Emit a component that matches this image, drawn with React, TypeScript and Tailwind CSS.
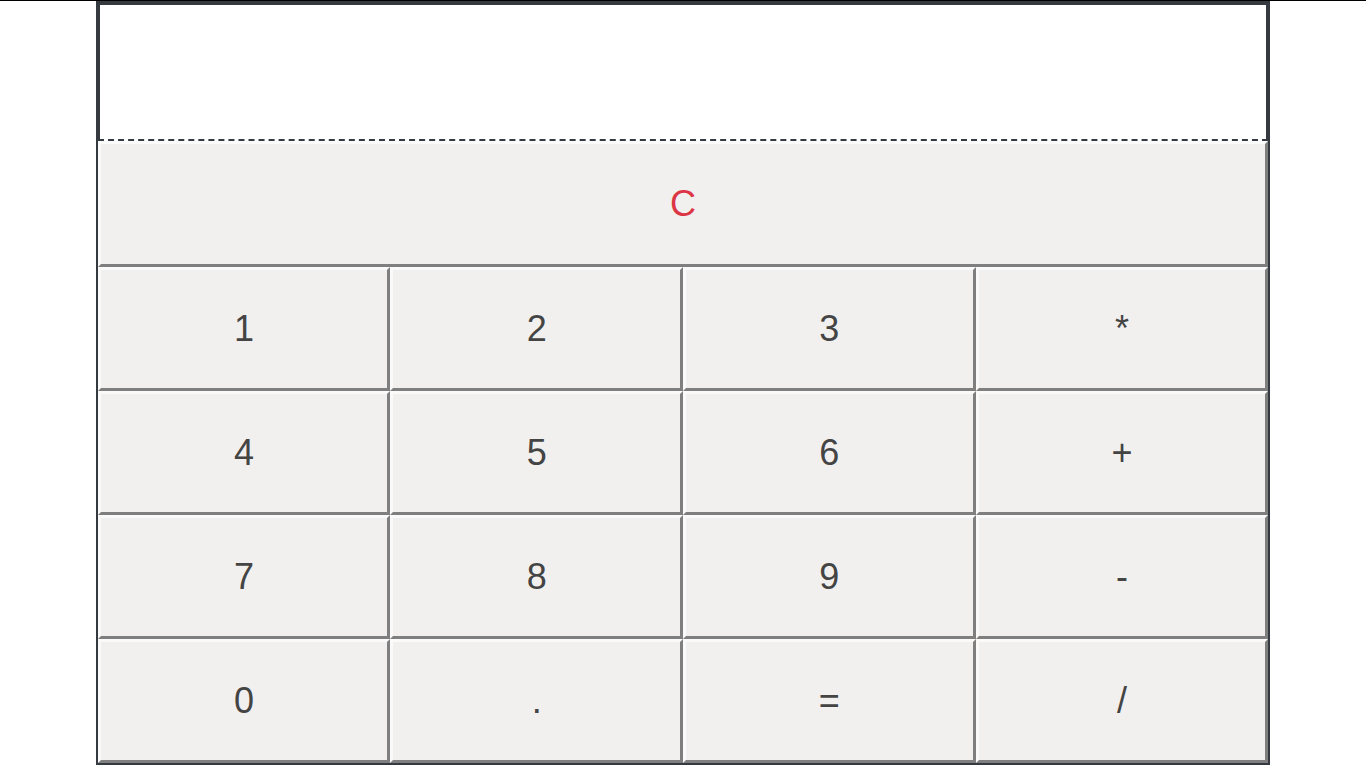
const keys = ['1', '2', '3', '*', '4', '5', '6', '+', '7', '8', '9', '-', '0', '.', '=', '/'];

function Key({ label, red }: { label: string; red?: boolean }) {
  return (
    <button
      className={
        'bg-[#f1f0ee] border-solid border-[3px] border-t-[#fafafa] border-l-[#fafafa] border-b-[#7f7f7f] border-r-[#7f7f7f] text-4xl ' +
        (red ? 'h-[126px] text-[#dc3545]' : 'h-[124px] text-[#444]')
      }
    >
      {label}
    </button>
  );
}

export default function App() {
  return (
    <div className="min-h-screen bg-white border-t border-black font-['Liberation_Sans',Arial,sans-serif]">
      <div className="w-[86%] mx-auto border-2 border-[#343a40] flex flex-col">
        <div className="h-[136px] bg-white border-2 border-b-0 border-[#343a40]" />
        <div className="border-t-2 border-dashed border-[#343a40]" />
        <Key label="C" red />
        <div className="grid grid-cols-4">
          {keys.map((k) => (
            <Key key={k} label={k} />
          ))}
        </div>
      </div>
    </div>
  );
}
